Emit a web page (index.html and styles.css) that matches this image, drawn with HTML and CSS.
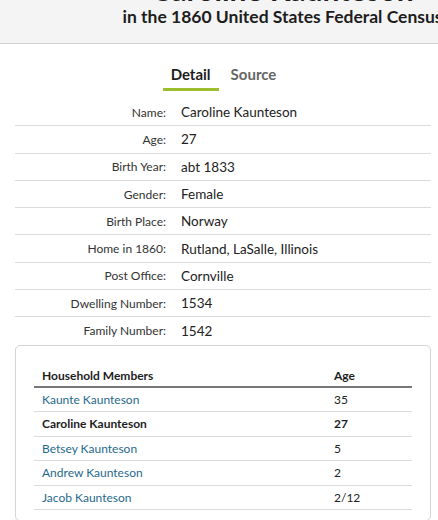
FILE: index.html
```html
<!DOCTYPE html>
<html>
<head>
<meta charset="utf-8">
<link rel="stylesheet" href="styles.css">
</head>
<body>
<header class="page-head">
  <div class="head-inner">
    <h1 class="title">Caroline Kaunteson</h1>
    <h2 class="subtitle">in the 1860 United States Federal Census</h2>
  </div>
</header>
<main class="content">
  <nav class="tabs">
    <span class="tab active">Detail</span>
    <span class="tab">Source</span>
  </nav>
  <div class="details">
    <div class="row"><span class="label">Name:</span><span class="value">Caroline Kaunteson</span></div>
    <div class="row"><span class="label">Age:</span><span class="value">27</span></div>
    <div class="row"><span class="label">Birth Year:</span><span class="value">abt 1833</span></div>
    <div class="row"><span class="label">Gender:</span><span class="value">Female</span></div>
    <div class="row"><span class="label">Birth Place:</span><span class="value">Norway</span></div>
    <div class="row"><span class="label">Home in 1860:</span><span class="value">Rutland, LaSalle, Illinois</span></div>
    <div class="row"><span class="label">Post Office:</span><span class="value">Cornville</span></div>
    <div class="row"><span class="label">Dwelling Number:</span><span class="value">1534</span></div>
    <div class="row last"><span class="label">Family Number:</span><span class="value">1542</span></div>
  </div>
  <section class="household">
    <table class="members">
      <thead>
        <tr><th class="c-name">Household Members</th><th class="c-age">Age</th></tr>
      </thead>
      <tbody>
        <tr><td><a class="link">Kaunte Kaunteson</a></td><td>35</td></tr>
        <tr class="self"><td>Caroline Kaunteson</td><td>27</td></tr>
        <tr><td><a class="link">Betsey Kaunteson</a></td><td>5</td></tr>
        <tr><td><a class="link">Andrew Kaunteson</a></td><td>2</td></tr>
        <tr><td><a class="link">Jacob Kaunteson</a></td><td>2/12</td></tr>
      </tbody>
    </table>
  </section>
</main>
</body>
</html>
```
FILE: styles.css
```css
html, body {
  margin: 0;
  padding: 0;
  background: #fff;
  overflow: hidden;
}
body {
  font-family: "Lato", "Open Sans", sans-serif;
  color: #333;
}
.page-head {
  background: #f4f4f4;
  border-bottom: 1px solid #cfcfcf;
  height: 43px;
  overflow: hidden;
  position: relative;
}
.head-inner {
  width: 565px;
  text-align: center;
  white-space: nowrap;
  margin-top: -28px;
}
.title {
  margin: 0;
  font-size: 30px;
  line-height: 34px;
  font-weight: 700;
  color: #1d1d1d;
}
.subtitle {
  margin: 0;
  font-size: 17.5px;
  line-height: 22px;
  font-weight: 700;
  color: #1d1d1d;
}
.content {
  margin: 0 7px 0 15px;
}
.tabs {
  display: flex;
  justify-content: center;
  gap: 4px;
  padding-top: 19px;
  padding-left: 1px;
}
.tab {
  padding: 2px 8px 5px;
  font-size: 15px;
  line-height: 18px;
  font-weight: 700;
  color: #666;
  border-bottom: 3px solid transparent;
}
.tab.active {
  color: #1d1d1d;
  border-bottom-color: #9dbf2f;
}
.details {
  margin-top: 8px;
}
.row {
  display: flex;
  align-items: center;
  height: 26.3px;
  border-bottom: 1px solid #dcdcdc;
}
.row.last {
  border-bottom: none;
}
.label {
  width: 151px;
  text-align: right;
  font-size: 12px;
  color: #333;
  flex: none;
}
.value {
  padding-left: 15px;
  font-size: 13.5px;
  color: #222;
}
.household {
  margin-top: 1px;
  border: 1px solid #d4d4d4;
  border-radius: 5px;
  padding: 19px 18px 10px;
}
.members {
  width: 100%;
  border-collapse: collapse;
  font-size: 12px;
}
.members th {
  text-align: left;
  font-weight: 700;
  color: #1d1d1d;
  padding: 2px 8px 2px;
  line-height: 17px;
  border-bottom: 2px solid #777;
}
.c-name {
  width: 276px;
}
.members td {
  padding: 4px 8px;
  line-height: 15.5px;
  border-bottom: 1px solid #dcdcdc;
  color: #222;
}
.members .self td {
  font-weight: 700;
  color: #1d1d1d;
}
.link {
  color: #1f6a8c;
  text-decoration: none;
}
```
